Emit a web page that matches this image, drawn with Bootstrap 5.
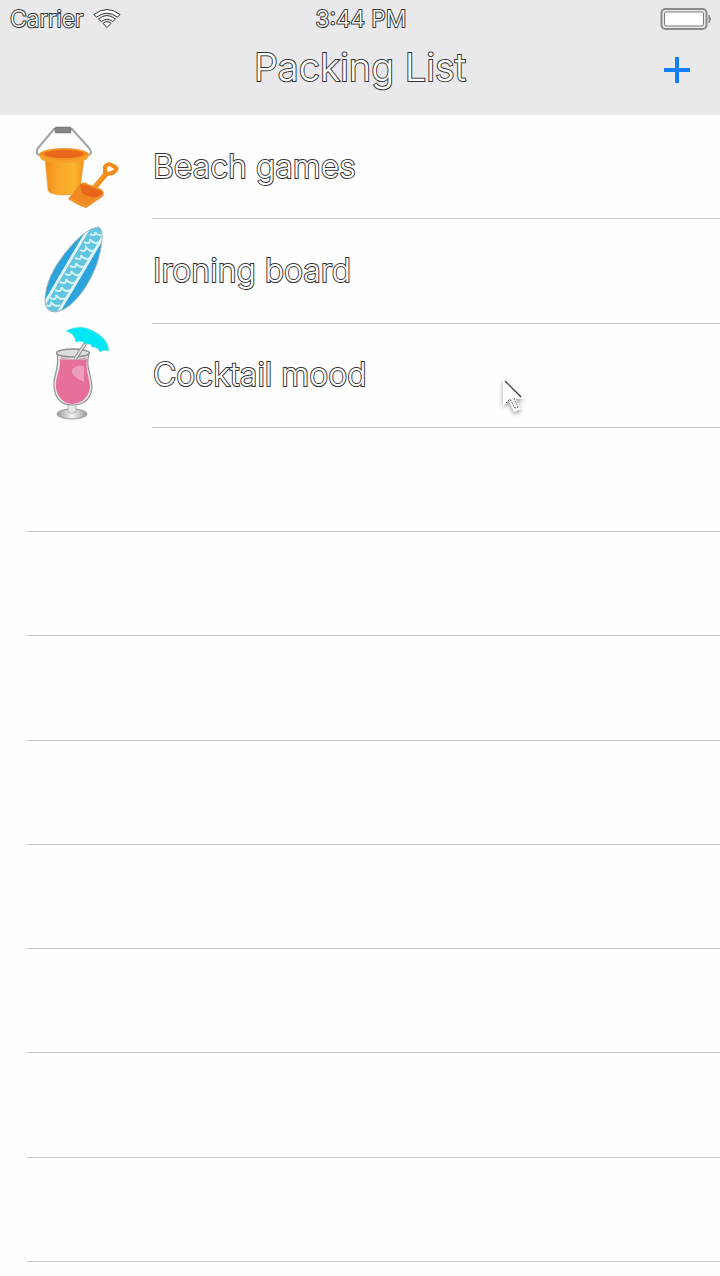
<!DOCTYPE html>
<html lang="en">
<head>
<meta charset="utf-8">
<meta name="viewport" content="width=device-width, initial-scale=1">
<title>Packing List</title>
<link href="https://cdn.jsdelivr.net/npm/bootstrap@5.3.0/dist/css/bootstrap.min.css" rel="stylesheet">
<style>
  body { font-family: Inter, Roboto, "Liberation Sans", sans-serif; background: #fefefe; }
  .top-area { background: #e9e9eb; height: 115px; }
  .status-bar { height: 38px; font-size: 23px; line-height: 38px; padding: 0 8px 0 10px; }
  .title-bar { height: 58px; }
  .side { flex: 1 1 0; }
  .outlined { color: #fff; font-weight: 300; -webkit-text-stroke: 2px #333; paint-order: stroke fill; }
  .screen-title { font-size: 38px; line-height: 58px; }
  .add-btn { width: 48px; height: 48px; margin: 6px 19px 0 0; }
  .packing { list-style: none; }
  .pack-row { flex: 1 0 104px; padding-left: 27px; }
  .pack-art { width: 125px; flex: none; }
  .pack-label { font-size: 32px; line-height: 40px; padding-left: 1px; }
  .ruled { border-bottom: 1px solid #c8c7cc; }
  .tail { flex: none; height: 14px; }
  .pointer { left: 496px; top: 50px; }
</style>
</head>
<body>
<div class="min-vh-100 d-flex flex-column overflow-hidden">
  <header class="top-area">
    <div class="status-bar d-flex align-items-center">
      <div class="side d-flex align-items-center">
        <span class="outlined">Carrier</span>
        <svg class="ms-2" width="32" height="24" viewBox="0 0 32 24" role="img" aria-label="Wi-Fi" fill="#fff" stroke="#333" stroke-width="1">
          <path d="M3 7.500Q16-2.500 29 7.500L26.500 10.200Q16 2.200 5.500 10.200Z"/>
          <path d="M7.500 12Q16 5 24.500 12L21.800 14.500Q16 10 10.200 14.500Z"/>
          <path d="M12 16.300Q16 13 20 16.300L16 20.500Z"/>
        </svg>
      </div>
      <time class="outlined" datetime="15:44">3:44 PM</time>
      <div class="side d-flex justify-content-end">
        <svg width="52" height="24" viewBox="0 0 52 24" role="img" aria-label="Battery full">
          <rect x="1.500" y="2" width="45" height="20" rx="4" fill="#e9e9eb" stroke="#8b898b" stroke-width="2"/>
          <rect x="4.500" y="5" width="39" height="14" rx="1.500" fill="#fff" stroke="#777" stroke-width="1"/>
          <path d="M49 8Q52 12 49 16Z" fill="#8b898b" stroke="#8b898b"/>
        </svg>
      </div>
    </div>
    <div class="title-bar d-flex align-items-center">
      <div class="side"></div>
      <h1 class="screen-title outlined m-0">Packing List</h1>
      <div class="side d-flex justify-content-end">
        <button type="button" class="add-btn btn p-0 border-0 d-flex align-items-center justify-content-center" aria-label="Add item">
          <svg width="28" height="28" viewBox="0 0 28 28" stroke="#157efb" stroke-width="4"><path d="M14 1V27M1 14H27"/></svg>
        </button>
      </div>
    </div>
  </header>

  <ul class="packing flex-fill d-flex flex-column m-0 p-0">
    <li class="pack-row d-flex">
      <div class="pack-art d-flex align-items-center">
        <svg width="100" height="100" viewBox="0 0 100 100" aria-hidden="true">
          <defs>
            <linearGradient id="pail"><stop offset="0" stop-color="#f28c18"/><stop offset=".3" stop-color="#f8a52b"/><stop offset=".75" stop-color="#fab42d"/><stop offset="1" stop-color="#f1921d"/></linearGradient>
          </defs>
          <path d="M12 38Q8 36 11 31L27 12H45L62 31Q66 36 62 38" fill="none" stroke="#a0a2a4" stroke-width="2"/>
          <rect x="28" y="10" width="16" height="6" rx="1" fill="#858585" stroke="#666" stroke-width=".5"/>
          <path d="M18 42L21 73Q22 78 37 78Q51 78 53 73L57 42Z" fill="url(#pail)" stroke="#e8983b" stroke-width=".5"/>
          <ellipse cx="37" cy="38" rx="25" ry="7" fill="#f29120"/>
          <path d="M12 37Q13 43 18 44Q37 48 56 44Q61 43 62 37Q37 49 12 37Z" fill="#f6a028"/>
          <ellipse cx="37" cy="37" rx="20" ry="4" fill="#e9681b"/>
          <path d="M67 71L79 57" stroke="#f28b1c" stroke-width="5" stroke-linecap="round"/>
          <path d="M67 70L78 57" stroke="#f9ae43" stroke-width="1"/>
          <path d="M78 56L78 50Q81 45 86 49Q92 51 88 54Q84 58 78 56Z" fill="#fff" stroke="#f28b1c" stroke-width="4" stroke-linejoin="round"/>
          <path d="M53 67Q57 64 61 67L74 72Q79 76 75 80L59 91Q54 90 41 82Z" fill="#f08a20"/>
          <path d="M53 67L61 69L74 74Q78 78 73 80Q61 81 55 76Z" fill="#e8651b"/>
          <path d="M43 82L59 89L76 77" fill="none" stroke="#f6a33d" stroke-width="1"/>
        </svg>
      </div>
      <div class="flex-fill d-flex align-items-center ruled"><span class="pack-label outlined">Beach games</span></div>
    </li>
    <li class="pack-row d-flex">
      <div class="pack-art d-flex align-items-center">
        <svg width="100" height="100" viewBox="0 0 100 100" aria-hidden="true">
          <defs><clipPath id="board"><path d="M71 6Q76 7 75 19Q73 44 58 67Q43 89 29 91Q17 91 18 77Q19 56 38 32Q57 8 71 6Z"/></clipPath></defs>
          <g clip-path="url(#board)">
            <rect width="100" height="100" fill="#2ba4dc"/>
            <path d="M68 0L16 88L27 96L82 7Z" fill="#62c5df"/>
            <path d="M65 2L15 87M80 9L28 97" stroke="#e2f5f9" stroke-width="3"/>
            <path d="M63 13q6 3 5-2q4 5 8 2M57 21q7 3 6-3q4 6 9 3M53 29q6 3 6-3q4 6 9 3M48 37q7 3 6-3q4 6 9 3M43 45q7 3 6-3q4 6 9 3M38 53q7 3 6-3q4 6 9 3M33 61q7 3 6-3q4 6 9 3M28 69q7 3 6-3q4 6 9 3M23 77q7 3 6-3q4 6 9 3M18 84q7 3 6-3q4 6 9 3" fill="none" stroke="#d3f2f5" stroke-width="2"/>
          </g>
          <path d="M71 6Q76 7 75 19Q73 44 58 67Q43 89 29 91Q17 91 18 77Q19 56 38 32Q57 8 71 6Z" fill="none" stroke="#acb6bc" stroke-width="1"/>
        </svg>
      </div>
      <div class="flex-fill d-flex align-items-center ruled"><span class="pack-label outlined">Ironing board</span></div>
    </li>
    <li class="pack-row d-flex position-relative">
      <div class="pack-art d-flex align-items-center">
        <svg width="100" height="100" viewBox="0 2 100 100" aria-hidden="true">
          <defs>
            <linearGradient id="glass"><stop offset="0" stop-color="#999"/><stop offset=".5" stop-color="#f4f4f4"/><stop offset="1" stop-color="#999"/></linearGradient>
          </defs>
          <ellipse cx="45" cy="90" rx="15" ry="5" fill="url(#glass)" stroke="#999" stroke-width="1"/>
          <path d="M41 80H49V88Q45 91 41 88Z" fill="#e7e7e7" stroke="#aaa" stroke-width=".8"/>
          <path d="M30 29C33 45 26 50 27 63Q29 81 45 81Q63 81 65 64C65 50 58 45 62 29Z" fill="#e7e7e7" stroke="#929292" stroke-width="1.200"/>
          <path d="M33 35C34 46 28 53 29 64Q32 79 45 80Q60 79 63 64C63 53 58 47 60 35Z" fill="#e66f9c"/>
          <ellipse cx="46" cy="29" rx="16.500" ry="4" fill="#ddd" stroke="#8e8e8e" stroke-width="1.500"/>
          <path d="M34 33Q46 37 59 33V36H34Z" fill="#d4a6b5"/>
          <path d="M48 35L60 17" stroke="#888" stroke-width="3.500"/>
          <path d="M48 35L60 17" stroke="#ddd" stroke-width="1.800"/>
          <path d="M45 46Q50 40 57 42V58Q49 55 45 49Z" fill="#eb9fbd"/>
          <path d="M39 7Q54-1 68 8Q81 15 82 27Q77 25 73 28Q71 23 65 23Q64 19 58 20Q56 16 49 18Q48 13 45 10Q42 8 39 7Z" fill="#00e8f5" stroke="#7ad5d9" stroke-width=".6"/>
        </svg>
      </div>
      <div class="flex-fill d-flex align-items-center ruled"><span class="pack-label outlined">Cocktail mood</span></div>
      <svg class="pointer position-absolute" width="36" height="44" viewBox="0 0 36 44" aria-hidden="true">
        <g style="filter:drop-shadow(0 2px 2px #0006)"><path d="M7 5V32L13 27L18 38L25 35L20 25H28Z" fill="#fff"/></g>
        <path d="M9 7L25 23" stroke="#333" stroke-width="1.200"/>
        <path d="M10 29L14 25L19 34L22 33L18 24" fill="none" stroke="#555" stroke-width="1" stroke-dasharray="2 1"/>
      </svg>
    </li>
    <li class="pack-row d-flex"><div class="flex-fill ruled"></div></li>
    <li class="pack-row d-flex"><div class="flex-fill ruled"></div></li>
    <li class="pack-row d-flex"><div class="flex-fill ruled"></div></li>
    <li class="pack-row d-flex"><div class="flex-fill ruled"></div></li>
    <li class="pack-row d-flex"><div class="flex-fill ruled"></div></li>
    <li class="pack-row d-flex"><div class="flex-fill ruled"></div></li>
    <li class="pack-row d-flex"><div class="flex-fill ruled"></div></li>
    <li class="pack-row d-flex"><div class="flex-fill ruled"></div></li>
    <li class="tail"></li>
  </ul>
</div>
<script src="https://cdn.jsdelivr.net/npm/bootstrap@5.3.0/dist/js/bootstrap.bundle.min.js"></script>
</body>
</html>
